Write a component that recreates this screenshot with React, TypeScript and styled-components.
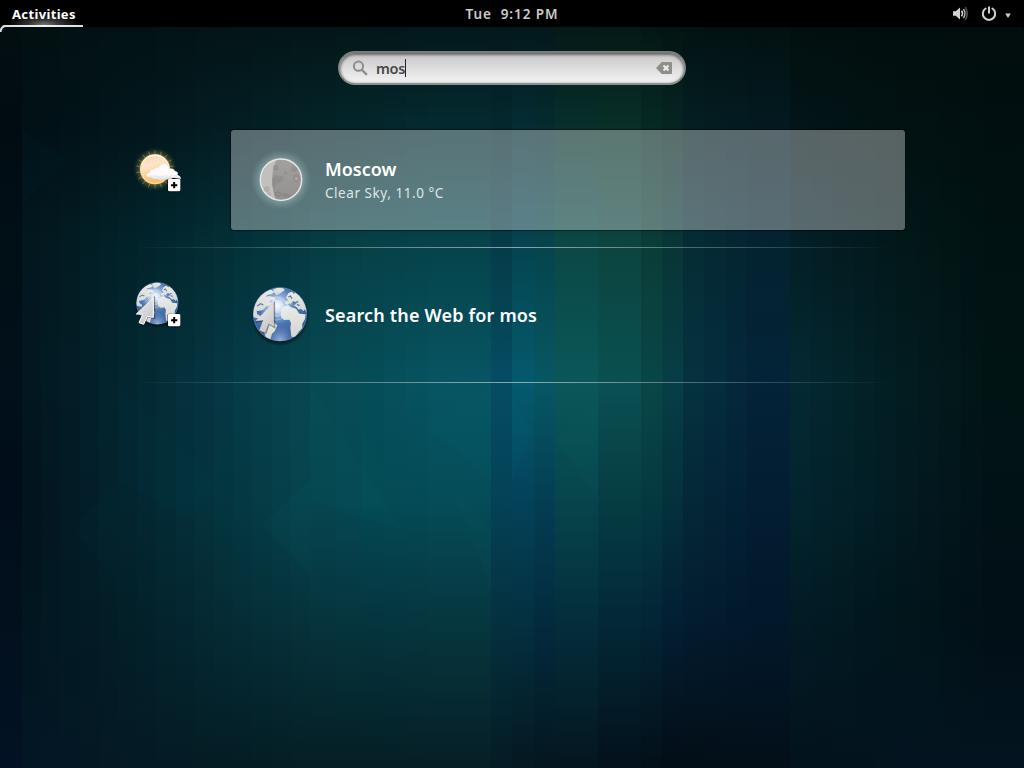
import React from "react";
import styled, { createGlobalStyle } from "styled-components";

const GlobalStyle = createGlobalStyle`
  * { box-sizing: border-box; }
  body {
    margin: 0;
    background: #000;
    font-family: "Noto Sans", "Open Sans", sans-serif;
    overflow: hidden;
  }
  svg { display: block; flex: none; }
`;

const Desktop = styled.div`
  display: grid;
  width: 1024px;
  height: 768px;
  overflow: hidden;
`;

const WallpaperArt = styled.svg`
  grid-area: 1 / 1;
`;

const Shell = styled.div`
  grid-area: 1 / 1;
  z-index: 1;
  display: flex;
  flex-direction: column;
`;

const TopBar = styled.header`
  display: grid;
  grid-template-columns: 1fr auto 1fr;
  height: 27px;
  background: #000;
  color: #ccc;
  font-size: 13.5px;
  font-weight: 600;
`;

const Activities = styled.div`
  width: 83px;
  height: 27px;
  padding-left: 12px;
  border-bottom: 2px solid;
  border-image: linear-gradient(90deg, #000 3px, #dcdcdc 5px, #f4f4f4 45px, #dcdcdc) 1;
  border-width: 0 0 2px;
  background: radial-gradient(ellipse 36px 12px at 44px 25px, #777 0%, #333 45%, transparent 100%);
  color: #fff;
  font-size: 13px;
  font-weight: 700;
  letter-spacing: 0.35px;
  line-height: 28px;
`;

const Clock = styled.div`
  white-space: pre;
  letter-spacing: 0.92px;
  line-height: 28px;
`;

const StatusArea = styled.div`
  display: flex;
  justify-content: flex-end;
`;

const ScreenCorners = styled.div`
  display: flex;
  justify-content: space-between;
  height: 8px;
  margin-top: -2px;
`;

const SearchEntry = styled.div`
  display: flex;
  align-items: center;
  width: 348px;
  height: 34px;
  margin: 18px auto 45px;
  padding: 0 12px;
  border: 2px solid;
  border-color: #777d7b #858988 #8c908f;
  border-radius: 17px;
  background: linear-gradient(#c6c6c6, #d6d6d6 35%, #f3f3f3);
  box-shadow: inset 0 2px 3px rgba(0, 0, 0, 0.45), inset 0 0 3px rgba(0, 0, 0, 0.25);
`;

const Query = styled.div`
  display: flex;
  align-items: center;
  flex: 1;
  margin-left: 8px;
  color: #48484a;
  font-size: 14.5px;
  font-weight: 600;
  letter-spacing: -0.3px;
  line-height: 20px;
`;

const Caret = styled.span`
  width: 1px;
  height: 18px;
  background: #222;
`;

const Results = styled.main`
  width: 786px;
  margin-left: 119px;
`;

const ProviderSection = styled.section`
  display: flex;
  height: 118px;
  margin-bottom: 17px;
  border-bottom: 1px solid;
  border-image: linear-gradient(
      90deg,
      transparent 2%,
      rgba(255, 255, 255, 0.22) 20%,
      rgba(255, 255, 255, 0.52) 50%,
      rgba(255, 255, 255, 0.22) 80%,
      transparent 98%
    ) 1;
`;

const ProviderIcon = styled.div`
  width: 112px;
  padding: 5px 0 0 6px;
`;

const Result = styled.div<{ $selected?: boolean }>`
  display: flex;
  align-items: center;
  width: 674px;
  height: 100px;
  padding-left: 9px;
  border-radius: 3px;
  background: ${(p) => (p.$selected ? "rgba(255, 255, 255, 0.34)" : "transparent")};
  box-shadow: ${(p) => (p.$selected ? "0 0 1px 1px rgba(0, 0, 0, 0.45)" : "none")};
`;

const ResultText = styled.div`
  margin-left: 5px;
  color: #fff;
`;

const Title = styled.div<{ $spacing: number }>`
  font-size: 18px;
  font-weight: 600;
  letter-spacing: ${(p) => p.$spacing}px;
  line-height: 25px;
`;

const Description = styled.div`
  color: #dfe6e6;
  font-size: 13.5px;
  letter-spacing: 0.55px;
  line-height: 22px;
`;

/* Wallpaper colours: each row lists the colour of every column at one height. */
const columns = [
  0, 22, 118, 214, 310, 362, 428, 491, 512, 534, 555, 598, 641, 662, 683, 747, 790, 896, 982,
];
const blended = [22, 118, 214, 310, 362, 683, 790, 896];

const tones: { y: number; colors: string }[] = [
  { y: 27, colors: "020e10 021012 021214 031416 031617 031719 03181a 03181a 03181b 03181a 041918 041916 031714 031513 021313 021112 020f0f 020e0e 020d0d" },
  { y: 130, colors: "010c12 011116 02161b 031d23 042428 04272c 042b31 04282f 052d34 052c30 07302c 083029 062a25 052523 041f22 031a20 021518 021112 010f10" },
  { y: 240, colors: "010f16 02171e 022229 032e36 053c43 064147 064249 053b47 05434f 06434a 0b4744 0c443e 0b3c36 083535 052c35 042330 031e26 021718 011212" },
  { y: 384, colors: "01101a 021720 032630 053844 084a54 054d58 075563 054c63 055a6d 075763 0a5759 0a5052 094648 073e46 05323f 032338 042932 021c20 011414" },
  { y: 500, colors: "010d1a 02141e 032530 043640 064650 034a55 054c58 044257 04425a 043e53 06454c 053d43 043940 04313c 042838 031d32 03242e 021a20 011216" },
  { y: 620, colors: "02101e 021620 031f28 052b35 06343d 05353f 06373f 04313f 043040 032b3e 042e3c 032837 032536 031f33 031c30 02182b 021b25 01151b 010f16" },
  { y: 768, colors: "021224 031624 041a24 041c24 051e24 051e24 061e26 041b24 041820 041620 04161f 03111b 030f18 030d16 030e16 030f18 03121c 031420 031420" },
];

const palette = tones.map((t) => t.colors.split(" "));

const mix = (a: string, b: string, t: number) => {
  const channel = (c: string, i: number) => parseInt(c.slice(i * 2, i * 2 + 2), 16);
  const out = [0, 1, 2].map((i) => Math.round(channel(a, i) * (1 - t) + channel(b, i) * t));
  return `rgb(${out.join(",")})`;
};

const strips = columns.flatMap((x, i) => {
  const end = columns[i + 1] ?? 1024;
  const smooth = blended.includes(x);
  const steps = smooth ? Math.round((end - x) / 21.3) : 1;
  return Array.from({ length: steps }, (_, s) => ({
    x: Math.round(x + ((end - x) * s) / steps),
    end: Math.round(x + ((end - x) * (s + 1)) / steps),
    stops: palette.map((row) => mix(row[i], row[i + 1] ?? row[i], s / steps)),
  }));
});

const facets: [string, string, number][] = [
  ["310,384 402,530 310,500", "#0a7778", 0.05],
  ["118,384 214,480 190,520 118,480", "#0a6678", 0.04],
  ["262,525 310,480 310,575", "#0b7474", 0.08],
  ["428,427 491,384 491,480", "#078aa0", 0.05],
  ["512,400 534,430 512,480", "#0487b0", 0.06],
  ["22,130 66,160 22,205", "#0a4450", 0.06],
  ["72,530 118,480 118,580", "#0a4e60", 0.05],
  ["555,440 598,400 598,500", "#0d766a", 0.06],
  ["362,427 384,470 384,510 362,510", "#0b7778", 0.06],
  ["450,480 491,530 491,590", "#0b7778", 0.05],
];

const Wallpaper = () => (
  <WallpaperArt width="1024" height="768" viewBox="0 0 1024 768">
    <defs>
      {strips.map((s) => (
        <linearGradient key={s.x} id={`strip${s.x}`} gradientUnits="userSpaceOnUse" x1="0" y1="0" x2="0" y2="768">
          {s.stops.map((c, i) => (
            <stop key={i} offset={tones[i].y / 768} stopColor={c} />
          ))}
        </linearGradient>
      ))}
    </defs>
    {strips.map((s) => (
      <rect key={s.x} x={s.x} y="0" width={s.end - s.x} height="768" fill={`url(#strip${s.x})`} />
    ))}
    {facets.map(([points, color, opacity]) => (
      <polygon key={points} points={points} fill={color} opacity={opacity} />
    ))}
  </WallpaperArt>
);

const StatusIcons = () => (
  <svg width="90" height="27" viewBox="0 0 90 27">
    <path d="M19 11.2h2.7l4.3-3.7v12l-4.3-3.7H19z" fill="#d2d2d2" />
    <path d="M27.6 10.8q1.7 2.7 0 5.4" fill="none" stroke="#d2d2d2" strokeWidth="1.6" />
    <path d="M29.5 9q2.9 4.5 0 9" fill="none" stroke="#b5b5b5" strokeWidth="1.5" />
    <path d="M31.4 7q3.6 6.500 0 13" fill="none" stroke="#555" strokeWidth="1.4" />
    <path d="M51.6 8.5A6.2 6.2 0 1 0 58.4 8.5" fill="none" stroke="#d2d2d2" strokeWidth="2" strokeLinecap="round" />
    <path d="M55 6.500v7" stroke="#d2d2d2" strokeWidth="2" />
    <path d="M71.2 13.500h5.600L74 18z" fill="#d2d2d2" />
  </svg>
);

const Magnifier = () => (
  <svg width="16" height="16" viewBox="0 0 16 16" fill="none" stroke="#8e8e8e">
    <circle cx="6.5" cy="6.2" r="4.6" strokeWidth="2" />
    <path d="M10 10l4.2 4.2" strokeWidth="2.4" strokeLinecap="round" />
  </svg>
);

const ClearIcon = () => (
  <svg width="16" height="14" viewBox="0 0 16 14">
    <path d="M5.8 1H15q1 0 1 1v10q0 1-1 1H5.8L0 7z" fill="#8d8f8a" />
    <path d="M7.500 4.400l5 5M12.500 4.400l-5 5" stroke="#eee" strokeWidth="2.1" />
  </svg>
);

const LaunchBadge = () => (
  <g>
    <rect x="127" y="131" width="41" height="41" rx="5" fill="#000" opacity="0.6" />
    <rect x="129" y="132" width="37" height="37" rx="4" fill="#fff" />
    <path d="M147.500 141v19M138 150.500h19" stroke="#000" strokeWidth="6" />
  </g>
);

const WeatherIcon = () => (
  <svg width="65" height="65" viewBox="0 0 195 195">
    <defs>
      <radialGradient id="sunGlow">
        <stop offset="0.55" stopColor="#d8b055" stopOpacity="0.85" />
        <stop offset="0.76" stopColor="#7b7544" stopOpacity="0.42" />
        <stop offset="1" stopColor="#3e4930" stopOpacity="0" />
      </radialGradient>
      <linearGradient id="sunRim" x1="0" y1="0" x2="0" y2="1">
        <stop offset="0" stopColor="#fff6dd" />
        <stop offset="1" stopColor="#ffd27c" />
      </linearGradient>
      <linearGradient id="sunDisc" x1="0" y1="0" x2="0.3" y2="1">
        <stop offset="0" stopColor="#f7d4a4" />
        <stop offset="0.4" stopColor="#fbe6ca" />
        <stop offset="1" stopColor="#f5bd70" />
      </linearGradient>
      <linearGradient id="cloud" x1="0" y1="0" x2="0" y2="1">
        <stop offset="0" stopColor="#fff" />
        <stop offset="0.7" stopColor="#fafafa" />
        <stop offset="1" stopColor="#d9dadb" />
      </linearGradient>
    </defs>
    <g transform="translate(-1 12)">
      <circle cx="91" cy="91" r="66" fill="url(#sunGlow)" />
      <g stroke="#e8c868" strokeWidth="2.200" opacity="0.5">
        {Array.from({ length: 18 }, (_, i) => (
          <path key={i} d="M91 46V34" transform={`rotate(${i * 20} 91 91)`} />
        ))}
      </g>
      <circle cx="91" cy="91" r="45" fill="url(#sunRim)" />
      <circle cx="91" cy="91" r="40" fill="url(#sunDisc)" />
      <path d="M67 112c-4-5 2-11 8-10 0-8 8-12 14-10 2-7 9-8 13-5 4-10 12-13 17-13 8 1 13 7 14 16 8-3 16 0 18 7 9 0 10 7 7 10 6 2 11 6 11 13l-24-4c-7 6-16 7-24 4-9 5-19 4-25 0-8 2-14-1-16-6-6 1-11 1-13-2z" fill="url(#cloud)" />
      <path d="M76 110c10 4 13-3 22 2s15 2 20-1 13 4 20 0 14 1 21-1" fill="none" stroke="#dcdcdc" strokeWidth="3" opacity="0.5" />
    </g>
    <LaunchBadge />
  </svg>
);

const MoonIcon = () => (
  <svg width="80" height="80" viewBox="0 0 240 240">
    <defs>
      <radialGradient id="halo">
        <stop offset="0.65" stopColor="#a5bfbf" stopOpacity="0.65" />
        <stop offset="0.8" stopColor="#92b3b3" stopOpacity="0.35" />
        <stop offset="1" stopColor="#85a8a8" stopOpacity="0" />
      </radialGradient>
      <linearGradient id="moonDark" x1="0" y1="0" x2="0" y2="1">
        <stop offset="0" stopColor="#a3a19f" />
        <stop offset="1" stopColor="#939190" />
      </linearGradient>
      <clipPath id="moonClip"><circle cx="123" cy="119" r="62" /></clipPath>
    </defs>
    <circle cx="123" cy="119" r="90" fill="url(#halo)" />
    <circle cx="123" cy="119" r="63" fill="#c2c0bd" />
    <g clipPath="url(#moonClip)">
      <path d="M112 54Q82 113 109 184H192V54z" fill="url(#moonDark)" />
      <g fill="#7c7b7a" opacity="0.35">
        <ellipse cx="107" cy="83" rx="9" ry="8" />
        <path d="M97 120q3-15 13-15 9 6 17 2 7 8 0 16-10 8-15 6-8 5-9 17-9-4-6-26z" />
        <circle cx="137" cy="99" r="5" />
        <circle cx="163" cy="88" r="9" />
        <ellipse cx="169" cy="115" rx="9" ry="12" />
        <path d="M131 158l20 6-4 9-23-5z" />
        <circle cx="80" cy="148" r="9" opacity="0.7" />
        <circle cx="88" cy="162" r="6" opacity="0.7" />
      </g>
      <circle cx="169" cy="116" r="5" fill="#aaa7a5" />
      <ellipse cx="113" cy="162" rx="9" ry="6" fill="none" stroke="#6d6d6d" strokeWidth="2.500" opacity="0.6" />
    </g>
    <circle cx="123" cy="119" r="62" fill="none" stroke="#eae8e6" strokeWidth="4" />
  </svg>
);

const Globe = ({ id }: { id: string }) => (
  <g>
    <defs>
      <radialGradient id={`${id}-sea`} gradientUnits="userSpaceOnUse" cx="112" cy="92" r="112">
        <stop offset="0" stopColor="#f4fbff" />
        <stop offset="0.2" stopColor="#a0bfe2" />
        <stop offset="0.5" stopColor="#4a75b0" />
        <stop offset="1" stopColor="#2d5590" />
      </radialGradient>
      <radialGradient id={`${id}-light`} gradientUnits="userSpaceOnUse" cx="120" cy="196" r="46">
        <stop offset="0" stopColor="#a5b8e2" stopOpacity="0.9" />
        <stop offset="1" stopColor="#7294cf" stopOpacity="0" />
      </radialGradient>
      <radialGradient id={`${id}-drop`}>
        <stop offset="0.8" stopColor="#000" stopOpacity="0.65" />
        <stop offset="1" stopColor="#000" stopOpacity="0" />
      </radialGradient>
      <linearGradient id={`${id}-land`} x1="0" y1="0" x2="0" y2="1">
        <stop offset="0" stopColor="#e9e9e6" />
        <stop offset="1" stopColor="#d5d6d0" />
      </linearGradient>
      <clipPath id={`${id}-clip`}><circle cx="120" cy="118" r="80" /></clipPath>
    </defs>
    <circle cx="120" cy="126" r="88" fill={`url(#${id}-drop)`} />
    <circle cx="120" cy="118" r="81" fill={`url(#${id}-sea)`} />
    <g clipPath={`url(#${id}-clip)`}>
      <circle cx="120" cy="196" r="46" fill={`url(#${id}-light)`} />
      <g fill={`url(#${id}-land)`}>
        <path d="M34 124L36 92 54 66 78 48 92 44 103 50 96 57 82 60 78 65 88 63 100 66 108 72 100 78 93 74 88 80 96 86 88 92 78 94 70 104 58 107 50 108 52 118 60 122 62 131 48 129z" />
        <path d="M99 44L112 38 130 40 134 46 122 54 110 61 103 53z" />
        <path d="M138 68L145 54 156 50 162 57 168 48 180 52 198 76 206 103 199 112 194 103 190 109 183 101 176 104 170 97 161 91 169 86 162 80 153 84 156 90 149 85 144 89 135 87 136 78 145 76z" />
        <path d="M125 101L137 92 148 91 151 96 168 101 178 116 197 118 195 132 187 146 187 159 175 172 166 186 154 185 151 159 153 144 148 134 132 135 123 126 122 113z" />
        <path d="M67 139L86 134 99 140 112 151 105 167 96 176 90 196 77 188 71 162z" />
      </g>
      <path d="M145 66l6-3 5 8M158 80l9 3 8-4M171 88l8 4M51 93l11-7 8 4" fill="none" stroke="#5b7fae" strokeWidth="4" />
      <circle cx="112" cy="94" r="32" fill="#fff" opacity="0.15" />
      <circle cx="112" cy="94" r="20" fill="#fff" opacity="0.28" />
      <g fill="none" stroke="#e8f6ff" strokeWidth="3" opacity="0.35">
        <circle cx="109" cy="101" r="22" />
        <circle cx="109" cy="101" r="34" />
      </g>
    </g>
    <circle cx="120" cy="118" r="80" fill="none" stroke="#b9cbe6" strokeWidth="2" opacity="0.35" />
  </g>
);

const PointerFill = ({ id }: { id: string }) => (
  <linearGradient id={id} x1="0" y1="0" x2="0.6" y2="1">
    <stop offset="0" stopColor="#f0f0f0" />
    <stop offset="1" stopColor="#c6c6c6" />
  </linearGradient>
);

const WebProviderIcon = () => (
  <svg width="65" height="65" viewBox="0 0 195 195">
    <defs><PointerFill id="pointerSmall" /></defs>
    <g transform="translate(3.400 8) scale(0.780)"><Globe id="small" /></g>
    <path d="M87 85L35 132l18 2-10 24 13 5 11-24 20 4z" fill="#111" opacity="0.45" stroke="#111" strokeWidth="7" />
    <path d="M85 83L34 132l19 1-11 25 14 5 11-24 18 3z" fill="url(#pointerSmall)" stroke="#fff" strokeWidth="3" strokeLinejoin="round" />
    <LaunchBadge />
  </svg>
);

const WebResultIcon = () => (
  <svg width="80" height="80" viewBox="0 0 240 240">
    <defs><PointerFill id="pointerLarge" /></defs>
    <Globe id="large" />
    <path d="M102 86L52 139l22-2-12 30 15 6 10-27 16 10z" fill="#222" opacity="0.45" stroke="#222" strokeWidth="6" />
    <path d="M100 84L48 137l23-2-12 31 15 6 11-28 16 9z" fill="url(#pointerLarge)" stroke="#e6e6e6" strokeWidth="1.500" strokeLinejoin="round" />
  </svg>
);

export default function App() {
  return (
    <>
      <GlobalStyle />
      <Desktop>
        <Wallpaper />
        <Shell>
          <TopBar>
            <Activities>Activities</Activities>
            <Clock>Tue  9:12 PM</Clock>
            <StatusArea><StatusIcons /></StatusArea>
          </TopBar>
          <ScreenCorners>
            <svg width="8" height="8" viewBox="0 0 8 8">
              <path d="M0 2h6Q1 2 0 7z" fill="#000" />
              <path d="M8 1H5.500Q1 1.500 0.500 7" stroke="#dcdcdc" strokeWidth="2" fill="none" />
            </svg>
            <svg width="8" height="8" viewBox="0 0 8 8">
              <path d="M2 2h6v6Q8 2 2 2z" fill="#000" />
            </svg>
          </ScreenCorners>
          <SearchEntry>
            <Magnifier />
            <Query>mos<Caret /></Query>
            <ClearIcon />
          </SearchEntry>
          <Results>
            <ProviderSection>
              <ProviderIcon><WeatherIcon /></ProviderIcon>
              <Result $selected>
                <MoonIcon />
                <ResultText>
                  <Title $spacing={0}>Moscow</Title>
                  <Description>Clear Sky, 11.0 °C</Description>
                </ResultText>
              </Result>
            </ProviderSection>
            <ProviderSection>
              <ProviderIcon><WebProviderIcon /></ProviderIcon>
              <Result>
                <WebResultIcon />
                <ResultText>
                  <Title $spacing={0.17}>Search the Web for mos</Title>
                </ResultText>
              </Result>
            </ProviderSection>
          </Results>
        </Shell>
      </Desktop>
    </>
  );
}
